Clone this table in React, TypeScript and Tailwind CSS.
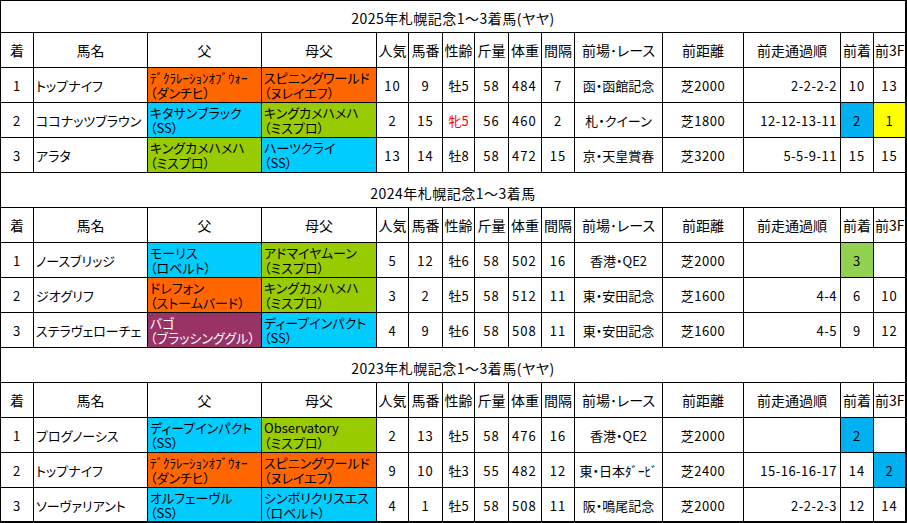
import React from 'react';

type Val = string | [string, string];
type Cell = { v: Val; bg?: string; fg?: string };

const W = [
  'w-[33px]',
  'w-[114px]',
  'w-[114px]',
  'w-[115px]',
  'w-[32px]',
  'w-[34px]',
  'w-[32px]',
  'w-[34px]',
  'w-[33px]',
  'w-[33px]',
  'w-[88px]',
  'w-[81px]',
  'w-[97px]',
  'w-[33px]',
  'w-[33px]',
];

// alignment for body cells (numeric columns get a little letter spacing)
const A = [
  'justify-center tracking-[1px]',
  'justify-start pl-[2px]',
  'justify-start pl-[2px]',
  'justify-start pl-[2px]',
  'justify-center tracking-[1px]',
  'justify-center tracking-[1px]',
  'justify-center',
  'justify-center tracking-[1px]',
  'justify-start pl-[3px] tracking-[1px]',
  'justify-center tracking-[1px]',
  'justify-center',
  'justify-center tracking-[0.5px]',
  'justify-end pr-[3px] tracking-[0.5px]',
  'justify-center tracking-[1px]',
  'justify-center tracking-[1px]',
];

const HEAD = ['着', '馬名', '父', '母父', '人気', '馬番', '性齢', '斤量', '体重', '間隔', '前場･レース', '前距離', '前走通過順', '前着', '前3F'];

const OR = 'bg-[#ff6600]';
const CY = 'bg-[#00ccff]';
const GR = 'bg-[#99cc00]';
const PU = 'bg-[#993366]';
const BL = 'bg-[#00b0f0]';
const YE = 'bg-[#ffff00]';
const LG = 'bg-[#92d050]';

const c = (v: Val, bg?: string, fg?: string): Cell => ({ v, bg, fg });

const SECTIONS: { title: string; rows: Cell[][] }[] = [
  {
    title: '2025年札幌記念1～3着馬(ヤヤ)',
    rows: [
      [c('1'), c('トップナイフ'), c(['ﾃﾞｸﾗﾚｰｼｮﾝｵﾌﾞｳｫｰ', '（ダンチヒ）'], OR), c(['スピニングワールド', '（ヌレイエフ）'], OR), c('10'), c('9'), c('牡5'), c('58'), c('484'), c('7'), c('函・函館記念'), c('芝2000'), c('2-2-2-2'), c('10'), c('13')],
      [c('2'), c('ココナッツブラウン'), c(['キタサンブラック', '（SS）'], CY), c(['キングカメハメハ', '（ミスプロ）'], GR), c('2'), c('15'), c('牝5', undefined, 'text-[#ff0000]'), c('56'), c('460'), c('2'), c('札・クイーン'), c('芝1800'), c('12-12-13-11'), c('2', BL), c('1', YE)],
      [c('3'), c('アラタ'), c(['キングカメハメハ', '（ミスプロ）'], GR), c(['ハーツクライ', '（SS）'], CY), c('13'), c('14'), c('牡8'), c('58'), c('472'), c('15'), c('京・天皇賞春'), c('芝3200'), c('5-5-9-11'), c('15'), c('15')],
    ],
  },
  {
    title: '2024年札幌記念1～3着馬',
    rows: [
      [c('1'), c('ノースブリッジ'), c(['モーリス', '（ロベルト）'], CY), c(['アドマイヤムーン', '（ミスプロ）'], GR), c('5'), c('12'), c('牡6'), c('58'), c('502'), c('16'), c('香港・QE2'), c('芝2000'), c(''), c('3', LG), c('')],
      [c('2'), c('ジオグリフ'), c(['ドレフォン', '（ストームバード）'], OR), c(['キングカメハメハ', '（ミスプロ）'], GR), c('3'), c('2'), c('牡5'), c('58'), c('512'), c('11'), c('東・安田記念'), c('芝1600'), c('4-4'), c('6'), c('10')],
      [c('3'), c('ステラヴェローチェ'), c(['バゴ', '（ブラッシンググル）'], PU, 'text-white'), c(['ディープインパクト', '（SS）'], CY), c('4'), c('9'), c('牡6'), c('58'), c('508'), c('11'), c('東・安田記念'), c('芝1600'), c('4-5'), c('9'), c('12')],
    ],
  },
  {
    title: '2023年札幌記念1～3着馬(ヤヤ)',
    rows: [
      [c('1'), c('プログノーシス'), c(['ディープインパクト', '（SS）'], CY), c(['Observatory', '（ミスプロ）'], GR), c('2'), c('13'), c('牡5'), c('58'), c('476'), c('16'), c('香港・QE2'), c('芝2000'), c(''), c('2', BL), c('')],
      [c('2'), c('トップナイフ'), c(['ﾃﾞｸﾗﾚｰｼｮﾝｵﾌﾞｳｫｰ', '（ダンチヒ）'], OR), c(['スピニングワールド', '（ヌレイエフ）'], OR), c('9'), c('10'), c('牡3'), c('55'), c('482'), c('12'), c('東・日本ﾀﾞｰﾋﾞ'), c('芝2400'), c('15-16-16-17'), c('14'), c('2', BL)],
      [c('3'), c('ソーヴァリアント'), c(['オルフェーヴル', '（SS）'], CY), c(['シンボリクリスエス', '（ロベルト）'], CY), c('4'), c('1'), c('牡5'), c('58'), c('508'), c('11'), c('阪・鳴尾記念'), c('芝2000'), c('2-2-2-3'), c('12'), c('14')],
    ],
  },
];

function TitleRow({ text, first }: { text: string; first: boolean }) {
  return (
    <div
      className={`flex items-end justify-center border-r-2 border-b border-black pb-[6px] text-[14px] leading-[16px] tracking-[0.5px] ${
        first ? 'h-[32px]' : 'h-[35px]'
      }`}
    >
      {text}
    </div>
  );
}

function HeadRow() {
  return (
    <div className="flex h-[35px]">
      {HEAD.map((h, i) => (
        <div
          key={i}
          className={`${W[i]} shrink-0 flex items-center overflow-hidden whitespace-nowrap border-b border-black text-[14px] ${
            i === 14 ? 'border-r-2 justify-start pl-[1px]' : 'border-r justify-center'
          }`}
        >
          {h}
        </div>
      ))}
    </div>
  );
}

function DataRow({ cells, last }: { cells: Cell[]; last: boolean }) {
  return (
    <div className="flex h-[35px]">
      {cells.map((cell, i) => {
        const two = Array.isArray(cell.v);
        return (
          <div
            key={i}
            className={`${W[i]} shrink-0 overflow-hidden whitespace-nowrap border-black ${
              i === 14 ? 'border-r-2' : 'border-r'
            } ${last ? 'border-b-2' : 'border-b'} ${cell.bg ?? ''} ${cell.fg ?? ''} ${
              two ? 'flex flex-col items-start pt-[2px] pl-[2px] leading-[15px]' : `flex items-center pt-[2px] ${A[i]}`
            }`}
          >
            {two ? (
              <>
                <span>{(cell.v as [string, string])[0]}</span>
                <span>{(cell.v as [string, string])[1]}</span>
              </>
            ) : (
              cell.v
            )}
          </div>
        );
      })}
    </div>
  );
}

export default function App() {
  return (
    <div className="w-[907px] h-[523px] overflow-hidden bg-white text-black border-l border-t border-black font-['Noto_Sans_CJK_JP',sans-serif] text-[13px] leading-[16px] [font-feature-settings:'palt']">
      {SECTIONS.map((s, si) => (
        <div key={si}>
          <TitleRow text={s.title} first={si === 0} />
          <HeadRow />
          {s.rows.map((r, ri) => (
            <DataRow key={ri} cells={r} last={si === 2 && ri === 2} />
          ))}
        </div>
      ))}
    </div>
  );
}
